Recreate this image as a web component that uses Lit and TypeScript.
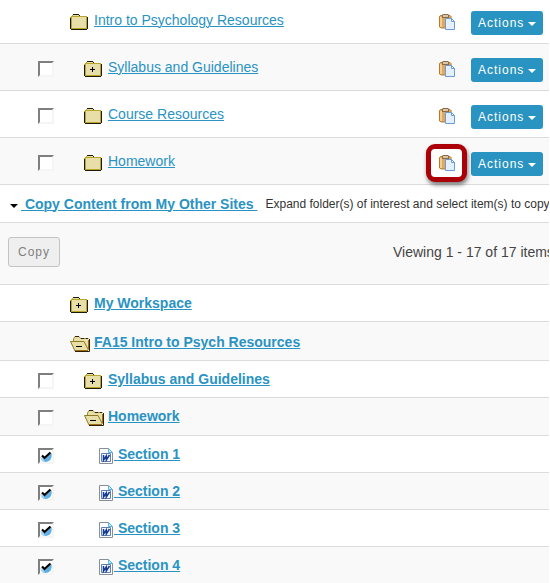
import { LitElement, html, css, svg, nothing } from "lit";
import { customElement, property } from "lit/decorators.js";
import { classMap } from "lit/directives/class-map.js";

type IconName = "folder" | "plus" | "open" | "doc";

interface Item {
  name: string;
  icon: IconName;
  level: number;
  selectable?: boolean;
  checked?: boolean;
  marked?: boolean;
}

const siteItems: Item[] = [
  { name: "Intro to Psychology Resources", icon: "folder", level: 0 },
  { name: "Syllabus and Guidelines", icon: "plus", level: 1, selectable: true },
  { name: "Course Resources", icon: "folder", level: 1, selectable: true },
  { name: "Homework", icon: "folder", level: 1, selectable: true, marked: true },
];

const otherItems: Item[] = [
  { name: "My Workspace", icon: "plus", level: 0 },
  { name: "FA15 Intro to Psych Resources", icon: "open", level: 0 },
  { name: "Syllabus and Guidelines", icon: "plus", level: 1, selectable: true },
  { name: "Homework", icon: "open", level: 1, selectable: true },
  { name: "Section 1", icon: "doc", level: 2, selectable: true, checked: true },
  { name: "Section 2", icon: "doc", level: 2, selectable: true, checked: true },
  { name: "Section 3", icon: "doc", level: 2, selectable: true, checked: true },
  { name: "Section 4", icon: "doc", level: 2, selectable: true, checked: true },
];

const closedFolder = svg`
  <path fill="#e8dfa8" d="M1 3h15v11H1zM3 1h6v1H3z"/>
  <path fill="#1c1a08" d="M3 0h6v1H3zM9 1h1v1H9zM0 4h1v11H0zM1 15h16v1H1zM17 3h1v12h-1z"/>
  <path fill="#b9a52c" d="M2 1h1v1H2zM1 2h16v1H1zM0 3h1v1H0zM1 3h1v11H1zM16 3h1v11h-1zM1 14h16v1H1z"/>`;

const glyphs = {
  folder: svg`<svg width="20" height="16" shape-rendering="crispEdges">${closedFolder}</svg>`,
  plus: svg`<svg width="20" height="16" shape-rendering="crispEdges">${closedFolder}
    <path fill="#000" d="M8 6h1v5H8zM6 8h5v1H6z"/></svg>`,
  open: svg`<svg width="20" height="16">
    <path fill="#e8dfa8" d="M3.500 6V3.500L5 1h4l1.500 1.500h8V14l-1 1H5L.5 5.500z"/>
    <path fill="none" stroke="#a08c2a" d="M3.500 5.500V3L5 .5h4l1.500 2h8"/>
    <path fill="none" stroke="#2a2106" d="M5 .5h4M11 2.500h3M16 2.500h2"/>
    <path fill="none" stroke="#8d7a22" d="M18.500 14 14 5.500H.5L5 15"/>
    <path fill="none" stroke="#2a2106" d="M5 15.500h14.500V3"/>
    <path fill="#a06c18" d="M18 4h1v9h-1zM5 14h13v1H5z"/>
    <path fill="#000" d="M6 10h6v1H6z"/></svg>`,
  doc: svg`<svg width="14" height="16">
    <path fill="#fff" stroke="#8a8f96" d="M.5.5h9l4 4v11H.5z"/>
    <path fill="#cfe9f8" stroke="#58b4de" d="M9.500.5v4h4z"/>
    <path fill="#f4f8fd" stroke="#5f7fb5" d="M2.500 5.500h9v8h-9z"/>
    <path fill="none" stroke="#123a90" stroke-width="1.500" d="M4.500 7v5L7.300 8v4L10.500 7"/></svg>`,
};

const clipboard = svg`<svg width="16" height="16">
  <path fill="#e0a95e" stroke="#b9782f" d="M1.500 1.500h9.500l1 1v11.500H2.500l-2-1V2.500z"/>
  <path fill="#f3cd92" d="M1 3h2v10H1z"/>
  <path fill="#8a6b46" d="M3 1 4 0h5l1 1v3H3z"/>
  <path fill="#d9c7ac" d="M4 1h5v2H4z"/>
  <path fill="#e3f0ff" stroke="#6c9bd8" d="M6.500 4.500h6l3 3v8h-9z"/>
  <path fill="#fff" stroke="#6c9bd8" d="M12.500 4.500v3h3z"/></svg>`;

@customElement("tick-box")
export class TickBox extends LitElement {
  @property() label = "";
  @property({ type: Boolean }) checked = false;

  static styles = css`
    :host {
      display: block;
    }
    .box {
      display: grid;
      width: 16px;
      height: 16px;
    }
    .input,
    .mark {
      grid-area: 1 / 1;
    }
    .input {
      appearance: none;
      box-sizing: border-box;
      width: 16px;
      height: 16px;
      margin: 0;
      border: 2px solid;
      border-color: #7f7f7f #f5f5f5 #f5f5f5 #7f7f7f;
      background: #fff;
    }
    .mark {
      display: none;
      pointer-events: none;
    }
    .input:checked + .mark {
      display: block;
    }
  `;

  render() {
    return html`<label class="box">
      <input class="input" type="checkbox" aria-label=${this.label} .checked=${this.checked} />
      <svg class="mark" width="16" height="16">
        <path fill="#5fb0e6" d="M13.500 5c1 5-1.500 9-6 9-2 0-3.500-.8-4.500-2.500l4-.5z" />
        <path fill="#a8d6f3" d="M2 9l1.500 3.500L7 14 5 10z" />
        <path fill="none" stroke="#000" stroke-width="2.200" d="M4 7.500 6.500 10 12.500 4.500" />
      </svg>
    </label>`;
  }
}

@customElement("app-root")
export class AppRoot extends LitElement {
  static styles = css`
    :host {
      display: block;
      overflow: hidden;
      padding-right: 1px;
      background: #fff;
      color: #444;
      font: 14px/16px "Liberation Sans", Arial, sans-serif;
    }
    .list {
      width: 100%;
      border-collapse: separate;
      border-spacing: 0;
      table-layout: fixed;
    }
    .tick-col {
      width: 70px;
    }
    .paste-col {
      width: 32px;
    }
    .actions-col {
      width: 78px;
    }
    .cell {
      box-sizing: border-box;
      height: 37px;
      padding: 12px 0 0;
      border-bottom: 1px solid #dcdcdc;
      vertical-align: top;
      text-align: left;
      font-weight: normal;
    }
    .row:nth-child(even) {
      background: #f9f9f9;
    }
    .site .cell {
      height: 47px;
      padding-top: 17px;
    }
    .site .row:first-child .cell {
      height: 44px;
      padding-top: 14px;
    }
    .site .cell.actions {
      padding-top: 14px;
    }
    .site .row:first-child .cell.actions {
      padding-top: 11px;
    }
    .open .cell {
      height: 38px;
    }
    .open.level0 .cell {
      height: 39px;
      padding-top: 14px;
    }
    .tick {
      padding-left: 38px;
    }
    .item {
      display: flex;
      gap: 4px;
      height: 16px;
      white-space: nowrap;
    }
    .level0 .item,
    .level1 .item {
      display: grid;
      grid-template-columns: 20px auto;
      justify-content: start;
    }
    .level1 .item {
      padding-left: 14px;
    }
    .level2 .item {
      padding-left: 29px;
      gap: 1px;
    }
    .icon {
      flex: none;
      display: block;
    }
    .icon svg,
    .paste svg {
      display: block;
    }
    .link {
      color: #2993c3;
      text-decoration: underline;
      text-underline-offset: 1px;
      text-decoration-thickness: 1px;
    }
    .item .link {
      margin-top: -2px;
    }
    .strong {
      font-weight: bold;
    }
    .paste {
      position: relative;
      display: block;
      width: 16px;
      height: 16px;
      padding: 0;
      border: 0;
      background: none;
    }
    .paste svg {
      position: relative;
    }
    .marked::before {
      content: "";
      position: absolute;
      box-sizing: border-box;
      inset: -11px -12px -11px -13px;
      border: 5px solid #ab0007;
      border-radius: 9px;
      background: #fff;
      box-shadow: 1px 3px 4px rgba(0, 0, 0, 0.5);
    }
    .menu {
      display: flex;
      align-items: center;
      gap: 4px;
      box-sizing: border-box;
      width: 72px;
      height: 24px;
      padding: 0 7px;
      border: 0;
      border-radius: 3px;
      background: #2993c1;
      color: #fff;
      font: 12px/16px "Liberation Sans", Arial, sans-serif;
      letter-spacing: 1px;
    }
    .caret {
      flex: none;
      border: 4px solid transparent;
      border-top-color: currentColor;
      border-bottom: 0;
    }
    .menu .caret {
      margin-top: 2px;
    }
    .heading {
      display: flex;
      align-items: center;
      box-sizing: border-box;
      height: 38px;
      margin: 0;
      padding: 0 0 0 10px;
      border-bottom: 1px solid #dcdcdc;
      font-size: 14px;
      white-space: nowrap;
      overflow: hidden;
    }
    .toggle {
      margin: 4px 3px 0 0;
      color: #000;
    }
    .hint {
      margin-left: 8px;
      font-size: 12px;
      font-weight: normal;
      color: #333;
    }
    .toolbar {
      display: flex;
      align-items: center;
      justify-content: space-between;
      box-sizing: border-box;
      height: 62px;
      padding: 0 0 3px 8px;
      border-bottom: 1px solid #dcdcdc;
      background: #f9f9f9;
    }
    .copy {
      box-sizing: border-box;
      width: 52px;
      height: 30px;
      padding: 0;
      border: 1px solid #c3c3c3;
      border-radius: 3px;
      background: #efefef;
      color: #808080;
      font: 12px/16px "Liberation Sans", Arial, sans-serif;
      letter-spacing: 1px;
    }
    .pager {
      flex: none;
      width: 156px;
      overflow: hidden;
      white-space: nowrap;
    }
  `;

  private renderRow(item: Item, other: boolean) {
    const label = item.icon === "doc" ? html`&nbsp;${item.name}` : item.name;
    return html`<tr class="row level${item.level} ${item.icon}">
      <td class="cell tick">
        ${item.selectable
          ? html`<tick-box .label=${`Select ${item.name}`} ?checked=${item.checked}></tick-box>`
          : nothing}
      </td>
      <th class="cell" scope="row">
        <div class="item">
          <span class="icon">${glyphs[item.icon]}</span>
          <a class=${classMap({ link: true, strong: other })} href="#">${label}</a>
        </div>
      </th>
      ${other
        ? nothing
        : html`<td class="cell">
              <button
                class=${classMap({ paste: true, marked: !!item.marked })}
                aria-label="Paste into ${item.name}"
              >${clipboard}</button>
            </td>
            <td class="cell actions">
              <button class="menu">Actions<span class="caret"></span></button>
            </td>`}
    </tr>`;
  }

  render() {
    return html`
      <table class="list site">
        <colgroup>
          <col class="tick-col" />
          <col />
          <col class="paste-col" />
          <col class="actions-col" />
        </colgroup>
        <tbody>${siteItems.map((item) => this.renderRow(item, false))}</tbody>
      </table>
      <h2 class="heading">
        <span class="caret toggle"></span>
        <a class="link" href="#">&nbsp;Copy Content from My Other Sites&nbsp;</a>
        <span class="hint">Expand folder(s) of interest and select item(s) to copy</span>
      </h2>
      <div class="toolbar">
        <button class="copy" disabled>Copy</button>
        <span class="pager">Viewing 1 - 17 of 17 items</span>
      </div>
      <table class="list">
        <colgroup>
          <col class="tick-col" />
          <col />
        </colgroup>
        <tbody>${otherItems.map((item) => this.renderRow(item, true))}</tbody>
      </table>
    `;
  }
}
